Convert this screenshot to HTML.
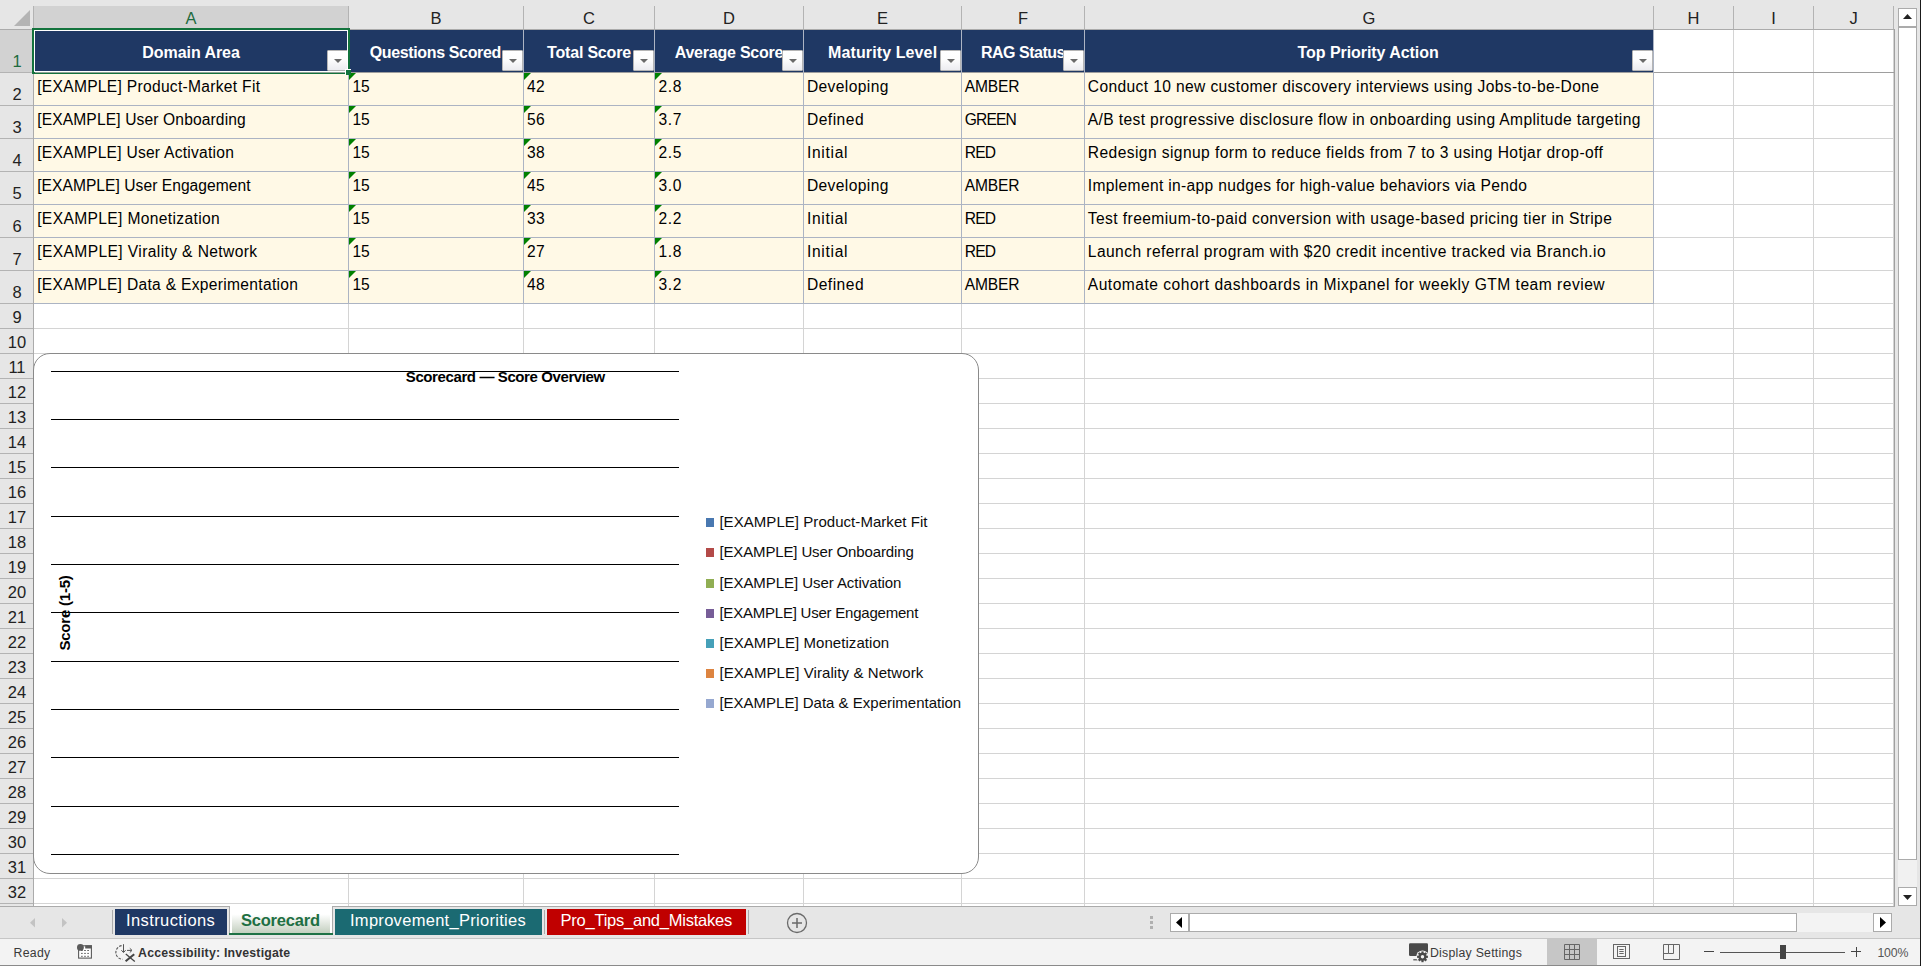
<!DOCTYPE html>
<html lang="en"><head><meta charset="utf-8"><title>Scorecard</title>
<style>
*{box-sizing:border-box;margin:0;padding:0}
html,body{width:1921px;height:966px;overflow:hidden;background:#e6e6e6}
body{position:relative;font-family:"Liberation Sans",sans-serif;color:#000}
.a{position:absolute}
.t{position:absolute;white-space:nowrap;line-height:1}
.ch{position:absolute;top:6px;height:23px;font-size:16.5px;line-height:1;color:#222;text-align:center}
.ch span{position:absolute;left:0;right:0;top:3.6px}
.rh{position:absolute;left:0;width:33px;font-size:16.5px;line-height:1;color:#222;text-align:center}
.c{position:absolute;font-size:15.6px;line-height:1;white-space:nowrap;color:#000}
.hd{position:absolute;font-size:16px;font-weight:bold;color:#fff;line-height:1;white-space:nowrap}
.fb{position:absolute;width:21px;height:21px;border:1px solid #b5b5b5;border-radius:1px;background:linear-gradient(#ffffff 0%,#fdfdfd 45%,#ececf0 100%)}
.fb:after{content:"";position:absolute;left:5.5px;top:8px;border-left:4px solid transparent;border-right:4px solid transparent;border-top:4.3px solid #6a6a6a}
.tri{position:absolute;width:0;height:0;border-top:7px solid #008000;border-right:7px solid transparent}
.lg{position:absolute;font-size:15px;line-height:1;white-space:nowrap;color:#0d0d0d}
.sq{position:absolute;width:8px;height:9px}
.tab{position:absolute;top:909px;height:26px}
.tl{position:absolute;top:912px;color:#fff;font-size:16.5px;line-height:1;white-space:nowrap}
.sb{position:absolute;font-size:12.3px;line-height:1;white-space:nowrap;color:#3a3a3a}
</style></head><body>

<div class="a" style="left:34px;top:30px;width:1860px;height:876px;background:#fff"></div>
<div class="a" style="left:34px;top:6px;width:314px;height:23px;background:#d2d2d2"></div>
<div class="a" style="left:0;top:30px;width:33px;height:42px;background:#d2d2d2"></div>
<svg class="a" style="left:14px;top:10px" width="17" height="17" viewBox="0 0 17 17"><path d="M16 0V16H0Z" fill="#b4b4b4"/></svg>
<div class="ch" style="left:34px;width:314px;color:#1e6b3f"><span>A</span></div>
<div class="ch" style="left:349px;width:174px;color:#222"><span>B</span></div>
<div class="ch" style="left:524px;width:130px;color:#222"><span>C</span></div>
<div class="ch" style="left:655px;width:148px;color:#222"><span>D</span></div>
<div class="ch" style="left:804px;width:157px;color:#222"><span>E</span></div>
<div class="ch" style="left:962px;width:122px;color:#222"><span>F</span></div>
<div class="ch" style="left:1085px;width:568px;color:#222"><span>G</span></div>
<div class="ch" style="left:1654px;width:79px;color:#222"><span>H</span></div>
<div class="ch" style="left:1734px;width:79px;color:#222"><span>I</span></div>
<div class="ch" style="left:1814px;width:79px;color:#222"><span>J</span></div>
<div class="a" style="left:33px;top:6px;width:1px;height:24px;background:#b3b3b3"></div>
<div class="a" style="left:348px;top:6px;width:1px;height:24px;background:#b3b3b3"></div>
<div class="a" style="left:523px;top:6px;width:1px;height:24px;background:#b3b3b3"></div>
<div class="a" style="left:654px;top:6px;width:1px;height:24px;background:#b3b3b3"></div>
<div class="a" style="left:803px;top:6px;width:1px;height:24px;background:#b3b3b3"></div>
<div class="a" style="left:961px;top:6px;width:1px;height:24px;background:#b3b3b3"></div>
<div class="a" style="left:1084px;top:6px;width:1px;height:24px;background:#b3b3b3"></div>
<div class="a" style="left:1653px;top:6px;width:1px;height:24px;background:#b3b3b3"></div>
<div class="a" style="left:1733px;top:6px;width:1px;height:24px;background:#b3b3b3"></div>
<div class="a" style="left:1813px;top:6px;width:1px;height:24px;background:#b3b3b3"></div>
<div class="a" style="left:1893px;top:6px;width:1px;height:24px;background:#b3b3b3"></div>
<div class="a" style="left:0;top:29px;width:1895px;height:1px;background:#ababab"></div>
<div class="a" style="left:33px;top:30px;width:1px;height:876px;background:#ababab"></div>
<div class="rh" style="top:53.0px;left:0.5px;color:#1e6b3f">1</div>
<div class="a" style="left:0;top:72px;width:33px;height:1px;background:#b3b3b3"></div>
<div class="rh" style="top:86.0px;left:0.5px">2</div>
<div class="a" style="left:0;top:105px;width:33px;height:1px;background:#b3b3b3"></div>
<div class="rh" style="top:119.0px;left:0.5px">3</div>
<div class="a" style="left:0;top:138px;width:33px;height:1px;background:#b3b3b3"></div>
<div class="rh" style="top:152.0px;left:0.5px">4</div>
<div class="a" style="left:0;top:171px;width:33px;height:1px;background:#b3b3b3"></div>
<div class="rh" style="top:185.0px;left:0.5px">5</div>
<div class="a" style="left:0;top:204px;width:33px;height:1px;background:#b3b3b3"></div>
<div class="rh" style="top:218.0px;left:0.5px">6</div>
<div class="a" style="left:0;top:237px;width:33px;height:1px;background:#b3b3b3"></div>
<div class="rh" style="top:251.0px;left:0.5px">7</div>
<div class="a" style="left:0;top:270px;width:33px;height:1px;background:#b3b3b3"></div>
<div class="rh" style="top:284.0px;left:0.5px">8</div>
<div class="a" style="left:0;top:303px;width:33px;height:1px;background:#b3b3b3"></div>
<div class="rh" style="top:309.0px;left:0.5px">9</div>
<div class="a" style="left:0;top:328px;width:33px;height:1px;background:#b3b3b3"></div>
<div class="rh" style="top:334.0px;left:0.5px">10</div>
<div class="a" style="left:0;top:353px;width:33px;height:1px;background:#b3b3b3"></div>
<div class="rh" style="top:359.0px;left:0.5px">11</div>
<div class="a" style="left:0;top:378px;width:33px;height:1px;background:#b3b3b3"></div>
<div class="rh" style="top:384.0px;left:0.5px">12</div>
<div class="a" style="left:0;top:403px;width:33px;height:1px;background:#b3b3b3"></div>
<div class="rh" style="top:409.0px;left:0.5px">13</div>
<div class="a" style="left:0;top:428px;width:33px;height:1px;background:#b3b3b3"></div>
<div class="rh" style="top:434.0px;left:0.5px">14</div>
<div class="a" style="left:0;top:453px;width:33px;height:1px;background:#b3b3b3"></div>
<div class="rh" style="top:459.0px;left:0.5px">15</div>
<div class="a" style="left:0;top:478px;width:33px;height:1px;background:#b3b3b3"></div>
<div class="rh" style="top:484.0px;left:0.5px">16</div>
<div class="a" style="left:0;top:503px;width:33px;height:1px;background:#b3b3b3"></div>
<div class="rh" style="top:509.0px;left:0.5px">17</div>
<div class="a" style="left:0;top:528px;width:33px;height:1px;background:#b3b3b3"></div>
<div class="rh" style="top:534.0px;left:0.5px">18</div>
<div class="a" style="left:0;top:553px;width:33px;height:1px;background:#b3b3b3"></div>
<div class="rh" style="top:559.0px;left:0.5px">19</div>
<div class="a" style="left:0;top:578px;width:33px;height:1px;background:#b3b3b3"></div>
<div class="rh" style="top:584.0px;left:0.5px">20</div>
<div class="a" style="left:0;top:603px;width:33px;height:1px;background:#b3b3b3"></div>
<div class="rh" style="top:609.0px;left:0.5px">21</div>
<div class="a" style="left:0;top:628px;width:33px;height:1px;background:#b3b3b3"></div>
<div class="rh" style="top:634.0px;left:0.5px">22</div>
<div class="a" style="left:0;top:653px;width:33px;height:1px;background:#b3b3b3"></div>
<div class="rh" style="top:659.0px;left:0.5px">23</div>
<div class="a" style="left:0;top:678px;width:33px;height:1px;background:#b3b3b3"></div>
<div class="rh" style="top:684.0px;left:0.5px">24</div>
<div class="a" style="left:0;top:703px;width:33px;height:1px;background:#b3b3b3"></div>
<div class="rh" style="top:709.0px;left:0.5px">25</div>
<div class="a" style="left:0;top:728px;width:33px;height:1px;background:#b3b3b3"></div>
<div class="rh" style="top:734.0px;left:0.5px">26</div>
<div class="a" style="left:0;top:753px;width:33px;height:1px;background:#b3b3b3"></div>
<div class="rh" style="top:759.0px;left:0.5px">27</div>
<div class="a" style="left:0;top:778px;width:33px;height:1px;background:#b3b3b3"></div>
<div class="rh" style="top:784.0px;left:0.5px">28</div>
<div class="a" style="left:0;top:803px;width:33px;height:1px;background:#b3b3b3"></div>
<div class="rh" style="top:809.0px;left:0.5px">29</div>
<div class="a" style="left:0;top:828px;width:33px;height:1px;background:#b3b3b3"></div>
<div class="rh" style="top:834.0px;left:0.5px">30</div>
<div class="a" style="left:0;top:853px;width:33px;height:1px;background:#b3b3b3"></div>
<div class="rh" style="top:859.0px;left:0.5px">31</div>
<div class="a" style="left:0;top:878px;width:33px;height:1px;background:#b3b3b3"></div>
<div class="rh" style="top:884.0px;left:0.5px">32</div>
<div class="a" style="left:0;top:903px;width:33px;height:1px;background:#b3b3b3"></div>
<div class="a" style="left:34px;top:72px;width:1860px;height:1px;background:#d4d4d4"></div>
<div class="a" style="left:34px;top:105px;width:1860px;height:1px;background:#d4d4d4"></div>
<div class="a" style="left:34px;top:138px;width:1860px;height:1px;background:#d4d4d4"></div>
<div class="a" style="left:34px;top:171px;width:1860px;height:1px;background:#d4d4d4"></div>
<div class="a" style="left:34px;top:204px;width:1860px;height:1px;background:#d4d4d4"></div>
<div class="a" style="left:34px;top:237px;width:1860px;height:1px;background:#d4d4d4"></div>
<div class="a" style="left:34px;top:270px;width:1860px;height:1px;background:#d4d4d4"></div>
<div class="a" style="left:34px;top:303px;width:1860px;height:1px;background:#d4d4d4"></div>
<div class="a" style="left:34px;top:328px;width:1860px;height:1px;background:#d4d4d4"></div>
<div class="a" style="left:34px;top:353px;width:1860px;height:1px;background:#d4d4d4"></div>
<div class="a" style="left:34px;top:378px;width:1860px;height:1px;background:#d4d4d4"></div>
<div class="a" style="left:34px;top:403px;width:1860px;height:1px;background:#d4d4d4"></div>
<div class="a" style="left:34px;top:428px;width:1860px;height:1px;background:#d4d4d4"></div>
<div class="a" style="left:34px;top:453px;width:1860px;height:1px;background:#d4d4d4"></div>
<div class="a" style="left:34px;top:478px;width:1860px;height:1px;background:#d4d4d4"></div>
<div class="a" style="left:34px;top:503px;width:1860px;height:1px;background:#d4d4d4"></div>
<div class="a" style="left:34px;top:528px;width:1860px;height:1px;background:#d4d4d4"></div>
<div class="a" style="left:34px;top:553px;width:1860px;height:1px;background:#d4d4d4"></div>
<div class="a" style="left:34px;top:578px;width:1860px;height:1px;background:#d4d4d4"></div>
<div class="a" style="left:34px;top:603px;width:1860px;height:1px;background:#d4d4d4"></div>
<div class="a" style="left:34px;top:628px;width:1860px;height:1px;background:#d4d4d4"></div>
<div class="a" style="left:34px;top:653px;width:1860px;height:1px;background:#d4d4d4"></div>
<div class="a" style="left:34px;top:678px;width:1860px;height:1px;background:#d4d4d4"></div>
<div class="a" style="left:34px;top:703px;width:1860px;height:1px;background:#d4d4d4"></div>
<div class="a" style="left:34px;top:728px;width:1860px;height:1px;background:#d4d4d4"></div>
<div class="a" style="left:34px;top:753px;width:1860px;height:1px;background:#d4d4d4"></div>
<div class="a" style="left:34px;top:778px;width:1860px;height:1px;background:#d4d4d4"></div>
<div class="a" style="left:34px;top:803px;width:1860px;height:1px;background:#d4d4d4"></div>
<div class="a" style="left:34px;top:828px;width:1860px;height:1px;background:#d4d4d4"></div>
<div class="a" style="left:34px;top:853px;width:1860px;height:1px;background:#d4d4d4"></div>
<div class="a" style="left:34px;top:878px;width:1860px;height:1px;background:#d4d4d4"></div>
<div class="a" style="left:34px;top:903px;width:1860px;height:1px;background:#d4d4d4"></div>
<div class="a" style="left:348px;top:30px;width:1px;height:876px;background:#d4d4d4"></div>
<div class="a" style="left:523px;top:30px;width:1px;height:876px;background:#d4d4d4"></div>
<div class="a" style="left:654px;top:30px;width:1px;height:876px;background:#d4d4d4"></div>
<div class="a" style="left:803px;top:30px;width:1px;height:876px;background:#d4d4d4"></div>
<div class="a" style="left:961px;top:30px;width:1px;height:876px;background:#d4d4d4"></div>
<div class="a" style="left:1084px;top:30px;width:1px;height:876px;background:#d4d4d4"></div>
<div class="a" style="left:1653px;top:30px;width:1px;height:876px;background:#d4d4d4"></div>
<div class="a" style="left:1733px;top:30px;width:1px;height:876px;background:#d4d4d4"></div>
<div class="a" style="left:1813px;top:30px;width:1px;height:876px;background:#d4d4d4"></div>
<div class="a" style="left:1893px;top:30px;width:1px;height:876px;background:#d4d4d4"></div>
<div class="a" style="left:1894px;top:29px;width:1px;height:877px;background:#a0a0a0"></div>
<div class="a" style="left:34px;top:72px;width:1860px;height:1px;background:#9e9e9e"></div>
<div class="a" style="left:34px;top:30px;width:1619px;height:42px;background:#1f3864"></div>
<div class="a" style="left:34px;top:73px;width:1619px;height:230px;background:#fff9e6"></div>
<div class="a" style="left:34px;top:105px;width:1620px;height:1px;background:#acb4c3"></div>
<div class="a" style="left:34px;top:138px;width:1620px;height:1px;background:#acb4c3"></div>
<div class="a" style="left:34px;top:171px;width:1620px;height:1px;background:#acb4c3"></div>
<div class="a" style="left:34px;top:204px;width:1620px;height:1px;background:#acb4c3"></div>
<div class="a" style="left:34px;top:237px;width:1620px;height:1px;background:#acb4c3"></div>
<div class="a" style="left:34px;top:270px;width:1620px;height:1px;background:#acb4c3"></div>
<div class="a" style="left:34px;top:303px;width:1620px;height:1px;background:#acb4c3"></div>
<div class="a" style="left:348px;top:30px;width:1px;height:274px;background:#acb4c3"></div>
<div class="a" style="left:523px;top:30px;width:1px;height:274px;background:#acb4c3"></div>
<div class="a" style="left:654px;top:30px;width:1px;height:274px;background:#acb4c3"></div>
<div class="a" style="left:803px;top:30px;width:1px;height:274px;background:#acb4c3"></div>
<div class="a" style="left:961px;top:30px;width:1px;height:274px;background:#acb4c3"></div>
<div class="a" style="left:1084px;top:30px;width:1px;height:274px;background:#acb4c3"></div>
<div class="a" style="left:1653px;top:30px;width:1px;height:274px;background:#acb4c3"></div>
<div class="a" style="left:34px;top:31px;width:293px;height:41px;overflow:hidden"><div class="hd" id="h0" style="left:108.3px;top:13.6px;letter-spacing:-0.055px;">Domain Area</div></div>
<div class="fb" style="left:327px;top:50px"></div>
<div class="a" style="left:349px;top:31px;width:153px;height:41px;overflow:hidden"><div class="hd" id="h1" style="left:20.7px;top:13.6px;letter-spacing:-0.358px;">Questions Scored</div></div>
<div class="fb" style="left:502px;top:50px"></div>
<div class="a" style="left:524px;top:31px;width:109px;height:41px;overflow:hidden"><div class="hd" id="h2" style="left:23.1px;top:13.6px;letter-spacing:-0.196px;">Total Score</div></div>
<div class="fb" style="left:633px;top:50px"></div>
<div class="a" style="left:655px;top:31px;width:127px;height:41px;overflow:hidden"><div class="hd" id="h3" style="left:19.7px;top:13.6px;letter-spacing:-0.221px;">Average Score</div></div>
<div class="fb" style="left:782px;top:50px"></div>
<div class="a" style="left:804px;top:31px;width:136px;height:41px;overflow:hidden"><div class="hd" id="h4" style="left:24.0px;top:13.6px;letter-spacing:0.115px;">Maturity Level</div></div>
<div class="fb" style="left:940px;top:50px"></div>
<div class="a" style="left:962px;top:31px;width:101px;height:41px;overflow:hidden"><div class="hd" id="h5" style="left:18.9px;top:13.6px;letter-spacing:-0.481px;">RAG Status</div></div>
<div class="fb" style="left:1063px;top:50px"></div>
<div class="a" style="left:1085px;top:31px;width:547px;height:41px;overflow:hidden"><div class="hd" id="h6" style="left:212.6px;top:13.6px;letter-spacing:-0.064px;">Top Priority Action</div></div>
<div class="fb" style="left:1632px;top:50px"></div>
<div class="c" id="c0_0" style="left:37.2px;top:78.8px;letter-spacing:0.292px;">[EXAMPLE] Product-Market Fit</div>
<div class="c" id="c0_1" style="left:352.4px;top:78.8px;letter-spacing:-0.080px;">15</div>
<div class="tri" style="left:349px;top:73px"></div>
<div class="c" id="c0_2" style="left:526.9px;top:78.8px;letter-spacing:0.520px;">42</div>
<div class="tri" style="left:524px;top:73px"></div>
<div class="c" id="c0_3" style="left:658.6px;top:78.8px;letter-spacing:0.604px;">2.8</div>
<div class="tri" style="left:655px;top:73px"></div>
<div class="c" id="c0_4" style="left:806.9px;top:78.8px;letter-spacing:0.387px;">Developing</div>
<div class="c" id="c0_5" style="left:964.8px;top:78.8px;letter-spacing:-0.214px;">AMBER</div>
<div class="c" id="c0_6" style="left:1087.8px;top:78.8px;letter-spacing:0.370px;">Conduct 10 new customer discovery interviews using Jobs-to-be-Done</div>
<div class="c" id="c1_0" style="left:37.2px;top:111.8px;letter-spacing:0.131px;">[EXAMPLE] User Onboarding</div>
<div class="c" id="c1_1" style="left:352.4px;top:111.8px;letter-spacing:-0.080px;">15</div>
<div class="tri" style="left:349px;top:106px"></div>
<div class="c" id="c1_2" style="left:526.9px;top:111.8px;letter-spacing:0.520px;">56</div>
<div class="tri" style="left:524px;top:106px"></div>
<div class="c" id="c1_3" style="left:658.6px;top:111.8px;letter-spacing:0.604px;">3.7</div>
<div class="tri" style="left:655px;top:106px"></div>
<div class="c" id="c1_4" style="left:806.9px;top:111.8px;letter-spacing:0.493px;">Defined</div>
<div class="c" id="c1_5" style="left:964.8px;top:111.8px;letter-spacing:-0.894px;">GREEN</div>
<div class="c" id="c1_6" style="left:1087.8px;top:111.8px;letter-spacing:0.376px;">A/B test progressive disclosure flow in onboarding using Amplitude targeting</div>
<div class="c" id="c2_0" style="left:37.2px;top:144.8px;letter-spacing:0.253px;">[EXAMPLE] User Activation</div>
<div class="c" id="c2_1" style="left:352.4px;top:144.8px;letter-spacing:-0.080px;">15</div>
<div class="tri" style="left:349px;top:139px"></div>
<div class="c" id="c2_2" style="left:526.9px;top:144.8px;letter-spacing:0.520px;">38</div>
<div class="tri" style="left:524px;top:139px"></div>
<div class="c" id="c2_3" style="left:658.6px;top:144.8px;letter-spacing:0.604px;">2.5</div>
<div class="tri" style="left:655px;top:139px"></div>
<div class="c" id="c2_4" style="left:806.9px;top:144.8px;letter-spacing:0.713px;">Initial</div>
<div class="c" id="c2_5" style="left:964.8px;top:144.8px;letter-spacing:-0.846px;">RED</div>
<div class="c" id="c2_6" style="left:1087.8px;top:144.8px;letter-spacing:0.416px;">Redesign signup form to reduce fields from 7 to 3 using Hotjar drop-off</div>
<div class="c" id="c3_0" style="left:37.2px;top:177.8px;letter-spacing:0.042px;">[EXAMPLE] User Engagement</div>
<div class="c" id="c3_1" style="left:352.4px;top:177.8px;letter-spacing:-0.080px;">15</div>
<div class="tri" style="left:349px;top:172px"></div>
<div class="c" id="c3_2" style="left:526.9px;top:177.8px;letter-spacing:0.520px;">45</div>
<div class="tri" style="left:524px;top:172px"></div>
<div class="c" id="c3_3" style="left:658.6px;top:177.8px;letter-spacing:0.604px;">3.0</div>
<div class="tri" style="left:655px;top:172px"></div>
<div class="c" id="c3_4" style="left:806.9px;top:177.8px;letter-spacing:0.387px;">Developing</div>
<div class="c" id="c3_5" style="left:964.8px;top:177.8px;letter-spacing:-0.214px;">AMBER</div>
<div class="c" id="c3_6" style="left:1087.8px;top:177.8px;letter-spacing:0.327px;">Implement in-app nudges for high-value behaviors via Pendo</div>
<div class="c" id="c4_0" style="left:37.2px;top:210.8px;letter-spacing:0.355px;">[EXAMPLE] Monetization</div>
<div class="c" id="c4_1" style="left:352.4px;top:210.8px;letter-spacing:-0.080px;">15</div>
<div class="tri" style="left:349px;top:205px"></div>
<div class="c" id="c4_2" style="left:526.9px;top:210.8px;letter-spacing:0.520px;">33</div>
<div class="tri" style="left:524px;top:205px"></div>
<div class="c" id="c4_3" style="left:658.6px;top:210.8px;letter-spacing:0.604px;">2.2</div>
<div class="tri" style="left:655px;top:205px"></div>
<div class="c" id="c4_4" style="left:806.9px;top:210.8px;letter-spacing:0.713px;">Initial</div>
<div class="c" id="c4_5" style="left:964.8px;top:210.8px;letter-spacing:-0.846px;">RED</div>
<div class="c" id="c4_6" style="left:1087.8px;top:210.8px;letter-spacing:0.411px;">Test freemium-to-paid conversion with usage-based pricing tier in Stripe</div>
<div class="c" id="c5_0" style="left:37.2px;top:243.8px;letter-spacing:0.391px;">[EXAMPLE] Virality &amp; Network</div>
<div class="c" id="c5_1" style="left:352.4px;top:243.8px;letter-spacing:-0.080px;">15</div>
<div class="tri" style="left:349px;top:238px"></div>
<div class="c" id="c5_2" style="left:526.9px;top:243.8px;letter-spacing:0.520px;">27</div>
<div class="tri" style="left:524px;top:238px"></div>
<div class="c" id="c5_3" style="left:658.6px;top:243.8px;letter-spacing:0.604px;">1.8</div>
<div class="tri" style="left:655px;top:238px"></div>
<div class="c" id="c5_4" style="left:806.9px;top:243.8px;letter-spacing:0.713px;">Initial</div>
<div class="c" id="c5_5" style="left:964.8px;top:243.8px;letter-spacing:-0.846px;">RED</div>
<div class="c" id="c5_6" style="left:1087.8px;top:243.8px;letter-spacing:0.427px;">Launch referral program with $20 credit incentive tracked via Branch.io</div>
<div class="c" id="c6_0" style="left:37.2px;top:276.8px;letter-spacing:0.304px;">[EXAMPLE] Data &amp; Experimentation</div>
<div class="c" id="c6_1" style="left:352.4px;top:276.8px;letter-spacing:-0.080px;">15</div>
<div class="tri" style="left:349px;top:271px"></div>
<div class="c" id="c6_2" style="left:526.9px;top:276.8px;letter-spacing:0.520px;">48</div>
<div class="tri" style="left:524px;top:271px"></div>
<div class="c" id="c6_3" style="left:658.6px;top:276.8px;letter-spacing:0.604px;">3.2</div>
<div class="tri" style="left:655px;top:271px"></div>
<div class="c" id="c6_4" style="left:806.9px;top:276.8px;letter-spacing:0.493px;">Defined</div>
<div class="c" id="c6_5" style="left:964.8px;top:276.8px;letter-spacing:-0.214px;">AMBER</div>
<div class="c" id="c6_6" style="left:1087.8px;top:276.8px;letter-spacing:0.491px;">Automate cohort dashboards in Mixpanel for weekly GTM team review</div>
<div class="a" style="left:32px;top:28px;width:318px;height:46px;border:2px solid #13733d"></div>
<div class="a" style="left:34px;top:30px;width:314px;height:42px;border:1px solid #fff"></div>
<div class="a" style="left:345px;top:69px;width:6px;height:6px;background:#13733d;border-left:1px solid #fff;border-top:1px solid #fff"></div>
<div class="a" style="left:35px;top:72px;width:310px;height:1px;background:#8fa396"></div>
<div class="a" style="left:33px;top:353px;width:946px;height:521px;background:#fff;border:1px solid #8a8a8a;border-radius:17px"></div>
<div class="a" style="left:51px;top:371px;width:628px;height:1px;background:#000"></div>
<div class="a" style="left:51px;top:419px;width:628px;height:1px;background:#000"></div>
<div class="a" style="left:51px;top:467px;width:628px;height:1px;background:#000"></div>
<div class="a" style="left:51px;top:516px;width:628px;height:1px;background:#000"></div>
<div class="a" style="left:51px;top:564px;width:628px;height:1px;background:#000"></div>
<div class="a" style="left:51px;top:612px;width:628px;height:1px;background:#000"></div>
<div class="a" style="left:51px;top:661px;width:628px;height:1px;background:#000"></div>
<div class="a" style="left:51px;top:709px;width:628px;height:1px;background:#000"></div>
<div class="a" style="left:51px;top:757px;width:628px;height:1px;background:#000"></div>
<div class="a" style="left:51px;top:806px;width:628px;height:1px;background:#000"></div>
<div class="a" style="left:51px;top:854px;width:628px;height:1px;background:#000"></div>
<div class="t" id="ctitle" style="left:405.8px;top:369.3px;font-size:15px;font-weight:bold;letter-spacing:-0.395px;">Scorecard — Score Overview</div>
<div class="a" style="left:63.6px;top:612.5px;width:0;height:0"><div class="t" id="ytitle" style="left:0;top:0;font-size:15px;font-weight:bold;transform:translate(-50%,-50%) rotate(-90deg);letter-spacing:-0.212px;">Score (1-5)</div></div>
<div class="sq" style="left:706px;top:518.0px;background:#4978b0"></div>
<div class="lg" id="l0" style="left:719.4px;top:513.5px;letter-spacing:0.052px;">[EXAMPLE] Product-Market Fit</div>
<div class="sq" style="left:706px;top:548.0px;background:#b34a48"></div>
<div class="lg" id="l1" style="left:719.4px;top:543.5px;letter-spacing:-0.136px;">[EXAMPLE] User Onboarding</div>
<div class="sq" style="left:706px;top:579.0px;background:#90ae53"></div>
<div class="lg" id="l2" style="left:719.4px;top:574.5px;letter-spacing:-0.056px;">[EXAMPLE] User Activation</div>
<div class="sq" style="left:706px;top:609.0px;background:#775d97"></div>
<div class="lg" id="l3" style="left:719.4px;top:604.5px;letter-spacing:-0.219px;">[EXAMPLE] User Engagement</div>
<div class="sq" style="left:706px;top:639.0px;background:#46a0b8"></div>
<div class="lg" id="l4" style="left:719.4px;top:634.5px;letter-spacing:0.067px;">[EXAMPLE] Monetization</div>
<div class="sq" style="left:706px;top:669.0px;background:#dd8440"></div>
<div class="lg" id="l5" style="left:719.4px;top:664.5px;letter-spacing:0.091px;">[EXAMPLE] Virality &amp; Network</div>
<div class="sq" style="left:706px;top:699.0px;background:#96a8d0"></div>
<div class="lg" id="l6" style="left:719.4px;top:694.5px;letter-spacing:0.001px;">[EXAMPLE] Data &amp; Experimentation</div>
<div class="a" style="left:1898px;top:8px;width:19px;height:19px;background:#fff;border:1px solid #ababab"></div>
<svg class="a" style="left:1903px;top:14px" width="9" height="5"><path d="M0 5L4.5 0L9 5Z" fill="#222"/></svg>
<div class="a" style="left:1898px;top:860px;width:19px;height:27px;background:#f1f1f1"></div>
<div class="a" style="left:1898px;top:27px;width:19px;height:833px;background:#fff;border:1px solid #ababab"></div>
<div class="a" style="left:1898px;top:887px;width:19px;height:19px;background:#fff;border:1px solid #ababab"></div>
<svg class="a" style="left:1903px;top:895px" width="9" height="5"><path d="M0 0L4.5 5L9 0Z" fill="#222"/></svg>
<div class="a" style="left:0;top:906px;width:1921px;height:33px;background:#e6e6e6"></div>
<div class="a" style="left:0;top:906px;width:230px;height:1px;background:#ababab"></div>
<div class="a" style="left:332px;top:906px;width:1563px;height:1px;background:#ababab"></div>
<div class="a" style="left:0;top:938px;width:1921px;height:1px;background:#c6c6c6"></div>
<svg class="a" style="left:30px;top:918px" width="5" height="10"><path d="M5 0V9.5L0 4.75Z" fill="#c3c3c3"/></svg>
<svg class="a" style="left:62px;top:918px" width="5" height="10"><path d="M0 0V9.5L5 4.75Z" fill="#c3c3c3"/></svg>
<div class="a" style="left:112px;top:910px;width:1px;height:24px;background:#ababab"></div>
<div class="tab" style="left:115px;width:112px;background:#1f3864"></div>
<div class="a" style="left:229px;top:906px;width:104px;height:29px;background:#fff;border-left:1px solid #ababab;border-right:1px solid #ababab"></div>
<div class="a" style="left:232px;top:908px;width:98px;height:25px;background:linear-gradient(#ffffff 0%,#ffffff 25%,#c3cfbf 100%)"></div>
<div class="a" style="left:229px;top:933px;width:104px;height:2px;background:#1e7145"></div>
<div class="tab" style="left:335px;width:207px;background:#1b6a72"></div>
<div class="a" style="left:544px;top:910px;width:1px;height:24px;background:#ababab"></div>
<div class="tab" style="left:547px;width:199px;background:#c00000"></div>
<div class="a" style="left:748px;top:910px;width:1px;height:24px;background:#ababab"></div>
<div class="tl" id="tb0" style="left:126.0px;color:#fff;letter-spacing:0.402px;">Instructions</div>
<div class="tl" id="tb1" style="left:241.0px;color:#1e6f43;font-weight:bold;letter-spacing:-0.213px;">Scorecard</div>
<div class="tl" id="tb2" style="left:350.0px;color:#fff;letter-spacing:0.289px;">Improvement_Priorities</div>
<div class="tl" id="tb3" style="left:560.5px;color:#fff;letter-spacing:-0.238px;">Pro_Tips_and_Mistakes</div>
<svg class="a" style="left:786px;top:912px" width="22" height="22" viewBox="0 0 22 22"><circle cx="11" cy="11" r="9.5" fill="none" stroke="#6a6a6a" stroke-width="1.3"/><path d="M6 11H16M11 6V16" stroke="#6a6a6a" stroke-width="1.5"/></svg>
<div class="a" style="left:1150px;top:916px;width:3px;height:3px;background:#b0b0b0"></div>
<div class="a" style="left:1150px;top:921px;width:3px;height:3px;background:#b0b0b0"></div>
<div class="a" style="left:1150px;top:926px;width:3px;height:3px;background:#b0b0b0"></div>
<div class="a" style="left:1170px;top:913px;width:19px;height:19px;background:#fff;border:1px solid #ababab"></div>
<svg class="a" style="left:1176px;top:917px" width="6" height="11"><path d="M6 0V11L0 5.5Z" fill="#000"/></svg>
<div class="a" style="left:1189px;top:913px;width:608px;height:19px;background:#fff;border:1px solid #ababab"></div>
<div class="a" style="left:1797px;top:913px;width:76px;height:19px;background:#f3f3f3"></div>
<div class="a" style="left:1873px;top:913px;width:19px;height:19px;background:#fff;border:1px solid #ababab"></div>
<svg class="a" style="left:1880px;top:917px" width="6" height="11"><path d="M0 0V11L6 5.5Z" fill="#000"/></svg>
<div class="a" style="left:0;top:939px;width:1921px;height:27px;background:#f3f3f3"></div>
<div class="a" style="left:0;top:965px;width:1921px;height:1px;background:#8a8a8a"></div>
<div class="sb" id="s0" style="left:13.6px;top:947px;letter-spacing:0.251px;">Ready</div>
<div class="sb" id="s1" style="left:138.1px;top:946.8px;font-weight:bold;color:#333;letter-spacing:0.206px;">Accessibility: Investigate</div>
<div class="sb" id="s2" style="left:1429.9px;top:947.2px;letter-spacing:0.252px;">Display Settings</div>
<div class="sb" id="s3" style="left:1877.4px;top:947.3px;color:#555;letter-spacing:-0.138px;">100%</div>
<svg class="a" style="left:76px;top:942px" width="18" height="18" viewBox="76 942 18 18"><rect x="78.6" y="945.8" width="12.8" height="12.3" fill="#fff" stroke="#5a5a5a" stroke-width="1.1"/><rect x="85.2" y="945.3" width="6.7" height="3.2" fill="#5a5a5a"/><circle cx="80.4" cy="947.4" r="3.4" fill="#5a5a5a"/><path d="M81.1 950.5h1.6M84.2 950.5h1.6M87.3 950.5h1.6M81.1 953.4h1.6M84.2 953.4h1.6M87.3 953.4h1.6M81.1 956.3h1.6M84.2 956.3h1.6M87.3 956.3h1.6" stroke="#5a5a5a" stroke-width="1"/></svg>
<svg class="a" style="left:113px;top:942px" width="24" height="22" viewBox="113 942 24 22"><path d="M121.6 945.6A6.9 6.9 0 0 0 122.6 959.3" fill="none" stroke="#555" stroke-width="1.1" stroke-dasharray="2.6 1.3"/><path d="M123.5 944.2V952M121.4 950.2L123.5 952.6L125.6 950.2" fill="none" stroke="#555" stroke-width="1"/><path d="M127 950.4H131.6M129.8 948.3L132 950.4L129.8 952.5" fill="none" stroke="#555" stroke-width="1"/><path d="M125.6 961.2L134.2 954.3" stroke="#444" stroke-width="2.1"/><path d="M125.8 953.9L134.8 961.5" stroke="#444" stroke-width="1.3"/></svg>
<svg class="a" style="left:1407px;top:941px" width="24" height="24" viewBox="1407 941 24 24"><rect x="1409" y="943.2" width="19" height="12.8" rx="1.2" fill="#4a4a4a"/><path d="M1413.3 959.8H1418" stroke="#4a4a4a" stroke-width="1.2"/><circle cx="1422.5" cy="956.8" r="6.3" fill="#f3f3f3"/><g fill="#4a4a4a"><circle cx="1422.5" cy="956.8" r="4"/><g transform="translate(1422.5 956.8)"><rect x="-1.1" y="-5.4" width="2.2" height="10.8"/><rect x="-1.1" y="-5.4" width="2.2" height="10.8" transform="rotate(45)"/><rect x="-1.1" y="-5.4" width="2.2" height="10.8" transform="rotate(90)"/><rect x="-1.1" y="-5.4" width="2.2" height="10.8" transform="rotate(135)"/></g></g><circle cx="1422.5" cy="956.8" r="1.7" fill="#f3f3f3"/></svg>
<div class="a" style="left:1547px;top:938px;width:50px;height:27px;background:#c6c6c6"></div>
<svg class="a" style="left:1562px;top:942px" width="20" height="20" viewBox="1562 942 20 20"><path d="M1564.5 944.5h15v15h-15zM1569.5 944.5v15M1574.5 944.5v15M1564.5 949.5h15M1564.5 954.5h15" fill="none" stroke="#666" stroke-width="1"/></svg>
<svg class="a" style="left:1611px;top:942px" width="22" height="20" viewBox="1611 942 22 20"><rect x="1613.5" y="944.5" width="16" height="14" fill="none" stroke="#666"/><rect x="1617.5" y="946.5" width="8" height="10" fill="none" stroke="#666"/><path d="M1619.3 949.5h4.4M1619.3 951.5h4.4M1619.3 953.5h4.4" stroke="#666" stroke-width="1"/></svg>
<svg class="a" style="left:1661px;top:942px" width="22" height="20" viewBox="1661 942 22 20"><path d="M1663.5 944.5h16v15h-16zM1668.5 944.5v9h-5M1673.5 944.5v9h-5" fill="none" stroke="#666" stroke-width="1"/></svg>
<div class="a" style="left:1704px;top:951px;width:10px;height:1px;background:#444"></div>
<div class="a" style="left:1720px;top:952px;width:125px;height:1px;background:#555"></div>
<div class="a" style="left:1780px;top:945px;width:6px;height:14px;background:#444"></div>
<div class="a" style="left:1851px;top:951px;width:10px;height:1px;background:#444"></div>
<div class="a" style="left:1855.5px;top:947px;width:1px;height:10px;background:#444"></div>
<div class="a" style="left:1920px;top:0;width:1px;height:966px;background:#1a1a1a"></div>
</body></html>
